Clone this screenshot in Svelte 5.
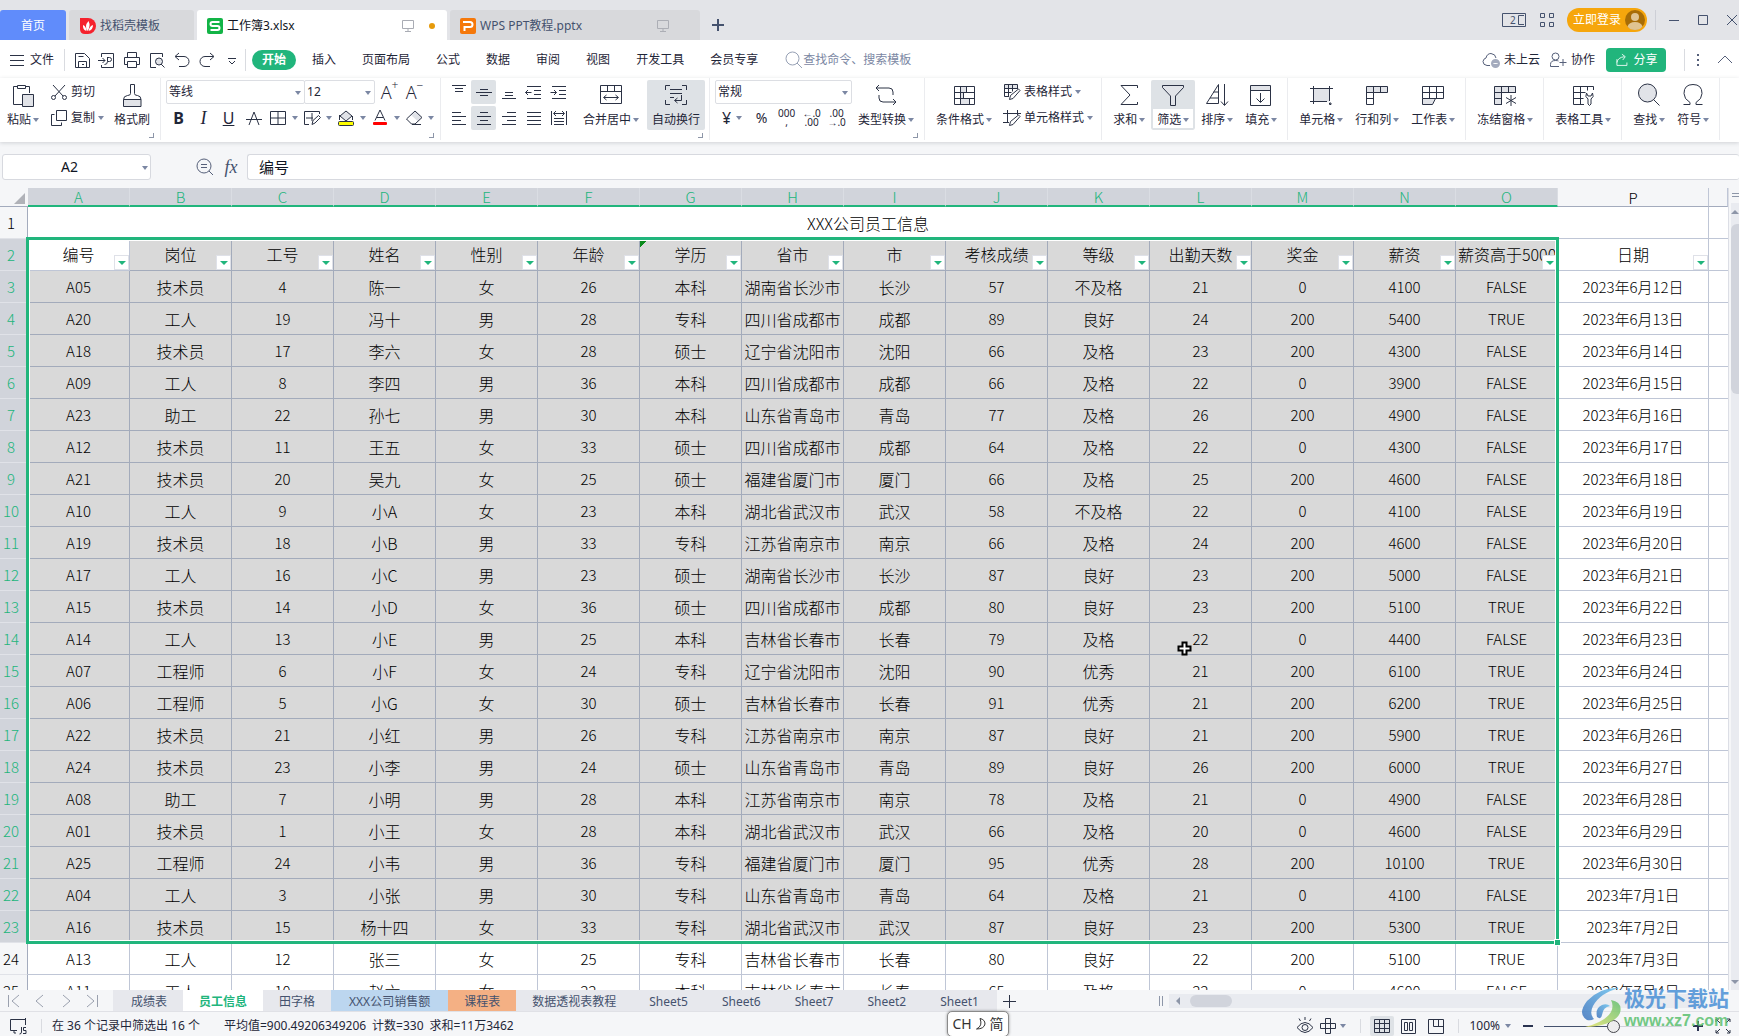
<script lang="ts">
	type Icon = { d: string; shade?: string };

	// 24px grid, used by the tall ribbon buttons
	const large: Record<string, Icon> = {
		paste: { d: 'M6.500 3.500H2.500V21.500H11M18.500 10V3.500H14.500M6.500 2.500h8v3h-8zM11.500 11.500h11v12h-11z', shade: 'M11.500 11.500h11v12h-11z' },
		brush: { d: 'M10.500 1.500h4v9q0 2 3 2 3.500.5 3.500 4H3.500q0-3.500 4-4 3 0 3-2zM3.500 16.500v7h17.500v-7', shade: 'M3.500 16.500h17.500v7H3.500z' },
		merge: { d: 'M1.500 2.500h21v18h-21zM1.500 8.500h21M8.500 2.500v6M15.500 2.500v6M5 14.500h14M7.500 12l-3 2.500 3 2.500M16.500 12l3 2.500-3 2.500' },
		wrap: { d: 'M1.500 7V2.500H6M18 2.500h4.500V7M1.500 17v4.500H6M18 21.500h4.500V17M6 6.500h12M6 10.500h12M6 14.500h4M17.500 12v5.500H11M13.500 15l-3 2.500 3 2.500' },
		convert: { d: 'M5 2L2 5l3 3M2.500 5H15q4 0 4 4v3M19 22l3-3-3-3M21.500 19H9q-4 0-4-4v-3' },
		conditional: { d: 'M2.500 3.500h20v18h-20zM2.500 9.500h20M2.500 15.500h20M8.500 3.500v18M14.500 3.500v6M11.500 9.500v6M17.500 15.500v6', shade: 'M8.500 3.500h6v6h-6zM8.500 9.500h3v6h-3zM8.500 15.500h9v6h-9z' },
		sum: { d: 'M20.500 5V2.500H4l9 9.500-9 9.500h16.500V19' },
		filter: { d: 'M14.500 13v9.500h-5V13L1.500 4.500v-2h21v2z', shade: 'M1.500 2.500h21v2l-8 8.500v9.500h-5V13L1.500 4.500z' },
		sort: { d: 'M1.500 20.500h12V1.500zM5 15h8.500M8.500 9h5M19.500 1v21M16 18.500l3.500 4 3.500-4' },
		fill: { d: 'M1.500 2.500h20v20h-20zM1.500 7.500h20M11.500 10v9M7.500 15.500l4 4 4-4', shade: 'M1.500 2.500h20v5h-20z' },
		cell: { d: 'M4.500 3v18M20.500 3v15M1 5.500h23M1 18.500h17M20.500 20v1.500h1.500V20z', shade: 'M4.500 5.500h16v13h-16z' },
		rowcol: { d: 'M1.500 3.500h21v6h-14v12h-7zM1.500 9.500h7M8.500 3.500v6M15.500 3.500v6M1.500 15.500h7', shade: 'M1.500 3.500h21v6h-21z' },
		sheet: { d: 'M1.500 3.500h21v12h-21zM1.500 9.500h21M8.500 3.500v12M15.500 3.500v12M1.500 15.500v6h10l3-6', shade: 'M1.500 15.500h13l-3 6h-10z' },
		freeze: { d: 'M22.500 10V3.500h-21v18H9M1.500 9.500h21M1.500 15.500h7M8.500 3.500v18M15.500 3.500v6M18 12v11M13 14.500l10 6M13 20.500l10-6', shade: 'M1.500 3.500h21v6h-14v12h-7z' },
		wrench: { d: 'M22.500 7V3.500h-20v18H13M2.500 9.500h12M2.500 15.500h10M9.500 3.500v18M16.500 3.500v4M15.500 10q-2 4 1.500 6v5q1.500 3 3 0v-5q3.500-2 1.500-6l-1.500 3h-3z' },
		find: { d: 'M16.500 16.500l6 6M19.500 10a9 9 0 1 1-18 0 9 9 0 1 1 18 0z', shade: 'M19.500 10a9 9 0 1 1-18 0 9 9 0 1 1 18 0z' },
		symbol: { d: 'M2.500 21.500h6.500v-2Q3 16 3 10.500 3 1.500 12 1.500t9 9q0 5.500-6 9v2h6.500' }
	};

	// 18px grid, used by toolbars and the status bar
	const small: Record<string, Icon> = {
		menu: { d: 'M2 4.500h14M2 9.500h14M2 14.500h14' },
		save: { d: 'M2.500 2.500h9l5 5v9h-14zM5.500 16.500v-6h8v6M5.500 5.500h5M9 13.500h2' },
		pdf: { d: 'M3.500 6V2.500h12v14h-12V14M0 9.500h7M4.500 7l2.500 2.500L4.500 12M9.500 6.500h2q2 0 2 2t-2 2h-2M9.500 6v4.500q0 3-3 3' },
		print: { d: 'M4.500 6.500v-5h9v5M4.500 13.500h-3v-7h15v7h-3M4.500 10.500h9v6h-9z' },
		preview: { d: 'M8 16.500H2.500v-14h12V6M13 13l3.500 3.500M14.500 10.500a3.500 3.500 0 1 1-7 0 3.500 3.500 0 1 1 7 0z', shade: 'M14.500 10.500a3.500 3.500 0 1 1-7 0 3.500 3.500 0 1 1 7 0z' },
		undo: { d: 'M6 2L2 5.500 6 9M2.500 5.500H11a5 5 0 0 1 0 10H6' },
		redo: { d: 'M12 2l4 3.500L12 9M15.500 5.500H7a5 5 0 0 0 0 10h5' },
		more: { d: 'M5 7.500h8M6 10l3 3 3-3' },
		cut: { d: 'M3 2l10 11M15 2L5 13M5.500 14.500a2 2 0 1 1-4 0 2 2 0 1 1 4 0zM16.500 14.500a2 2 0 1 1-4 0 2 2 0 1 1 4 0z' },
		copy: { d: 'M6.500 1.500h10v10h-10zM4.500 5.500h-3v11h10v-3' },
		strike: { d: 'M4 16L9 3l5 13M1 10.500h16' },
		borders: { d: 'M1.500 2.500h15v13h-15zM9 2.500v13M1.500 9h15' },
		draw: { d: 'M16.500 5V2.500h-15v13H6M9 4v8M3 9h7M9 15.500l1-4 5.500-5 2 2-5.500 5.500z' },
		eraser: { d: 'M7 15.500h9M6.500 15l-5-5 8.500-8 7 6.500-7 6.500z', shade: 'M6 6l4-4 7 6.500-4 4z' },
		top: { d: 'M2 2.500h14M5 5.500h8M5 8.500h8' },
		middle: { d: 'M5 6.500h8M1 9.500h16M5 12.500h8' },
		bottom: { d: 'M5 9.500h8M5 12.500h8M2 15.500h14' },
		outdent: { d: 'M2 3.500h14M9 7.500h7M9 11.500h7M2 15.500h14M0.500 9.500h6M3 7L0.500 9.500 3 12' },
		indent: { d: 'M2 3.500h14M9 7.500h7M9 11.500h7M2 15.500h14M0.500 9.500h6M4 7l2.500 2.500L4 12' },
		left: { d: 'M2 3.500h9M2 7.500h14M2 11.500h9M2 15.500h14' },
		center: { d: 'M5 3.500h8M2 7.500h14M5 11.500h8M2 15.500h14' },
		right: { d: 'M7 3.500h9M2 7.500h14M7 11.500h9M2 15.500h14' },
		justify: { d: 'M2 3.500h14M2 7.500h14M2 11.500h14M2 15.500h14' },
		distribute: { d: 'M1.500 2v14M16.500 2v14M4 4.500h10M6 2L3.500 4.500 6 7M12 2l2.500 2.500L12 7M4 9.500h10M4 12.500h10M4 15.500h10' },
		tablestyle: { d: 'M14.500 6V1.500h-13v12H6M1.500 5.500h13M1.500 9.500h7M5.500 1.500v12M9.500 1.500v7M6.500 16.500l1-4 8-6.500 1.500 1.500-7 8z', shade: 'M1.500 1.500h13v4h-13z' },
		cellstyle: { d: 'M4.500 1v13M0 4.500h18M14.500 1v5M0 13.500h6M6.500 16.500l1-4 8-6.500 1.500 1.500-7 8z' },
		search: { d: 'M12 12l5 5M14 7.500a6.500 6.500 0 1 1-13 0 6.500 6.500 0 1 1 13 0z' },
		zoomout: { d: 'M13 13l4 4M15 8a7 7 0 1 1-14 0 7 7 0 1 1 14 0zM5 6.500h6M5 9.500h6' },
		cloud: { d: 'M8 14.500H5q-4-.5-4-4 .5-3 3-3.500Q5 2.500 9 2.500q4.500.5 5 4.500' },
		person: { d: 'M10 5.500a3.500 3.500 0 1 1-7 0 3.500 3.500 0 1 1 7 0zM10 15.500H1.500v-2q0-4 5-4 2 0 3 .5M14 8v7M10.500 11.500h7' },
		share: { d: 'M3.500 8v7.500h12V12M3.500 12q1-6 9-7M9.500 2l4 3-3 4' },
		dots: { d: 'M8.500 3v2M9.500 3v2M8.500 8v2M9.500 8v2M8.500 13v2M9.500 13v2' },
		up: { d: 'M2 12l7-7 7 7' },
		first: { d: 'M3.500 3v12M14 3L7 9l7 6' },
		prev: { d: 'M12 3L5 9l7 6' },
		next: { d: 'M6 3l7 6-7 6' },
		last: { d: 'M14.500 3v12M4 3l7 6-7 6' },
		plus: { d: 'M9.500 3v13M3 9.500h13' },
		macro: { d: 'M8 13.500H1.500v-11h15V8M16.500 1v7M12.500 10v5q0 2-2 2M5 13v3h2M17 10.500h-2.500v3H17v3h-3' },
		eye: { d: 'M1 10.500q8-10 16 0-8 10-16 0zM12 10.500a3 3 0 1 1-6 0 3 3 0 1 1 6 0zM9 0v3M3 1.500l1.500 2.500M15 1.500L13.500 4' },
		cross: { d: 'M6.500 1.500h5v15h-5zM1.500 6.500h15v5h-15z' },
		grid: { d: 'M1.500 2.500h15v13h-15zM6.500 2.500v13M11.500 2.500v13M1.500 6.500h15M1.500 11.500h15' },
		page: { d: 'M1.500 2.500h14v14h-14zM4.500 5.500h3v8h-3zM9.500 5.500h3v8h-3z' },
		split: { d: 'M1.500 2.500h15v14h-15zM6.500 2.500v7h10M11.500 2.500v7' },
		full: { d: 'M6 6L2 2M2 5V2h3M12 6l4-4M13 2h3v3M6 12l-4 4M2 13v3h3M12 12l4 4M16 13v3h-3' },
		monitor: { d: 'M3.500 3.500h11v8h-11zM9 12v3M6 14.500h6' }
	};

	const menus = ['插入', '页面布局', '公式', '数据', '审阅', '视图', '开发工具', '会员专享'];
	const quick: [string, string][] = [
		['save', '保存'],
		['pdf', '输出为PDF'],
		['print', '打印'],
		['preview', '打印预览'],
		['undo', '撤销'],
		['redo', '恢复'],
		['more', '更多']
	];
	const alignTop: [string, string][] = [
		['top', '顶端对齐'],
		['middle', '垂直居中'],
		['bottom', '底端对齐'],
		['outdent', '减少缩进量'],
		['indent', '增加缩进量']
	];
	const alignBottom: [string, string][] = [
		['left', '左对齐'],
		['center', '水平居中'],
		['right', '右对齐'],
		['justify', '两端对齐'],
		['distribute', '分散对齐']
	];

	const columns = 'ABCDEFGHIJKLMNOP'.split('');
	const headers = '编号 岗位 工号 姓名 性别 年龄 学历 省市 市 考核成绩 等级 出勤天数 奖金 薪资 薪资高于5000 日期'.split(' ');

	const rows = `A05 技术员 4 陈一 女 26 本科 湖南省长沙市 长沙 57 不及格 21 0 4100 FALSE 2023年6月12日
A20 工人 19 冯十 男 28 专科 四川省成都市 成都 89 良好 24 200 5400 TRUE 2023年6月13日
A18 技术员 17 李六 女 28 硕士 辽宁省沈阳市 沈阳 66 及格 23 200 4300 FALSE 2023年6月14日
A09 工人 8 李四 男 36 本科 四川省成都市 成都 66 及格 22 0 3900 FALSE 2023年6月15日
A23 助工 22 孙七 男 30 本科 山东省青岛市 青岛 77 及格 26 200 4900 FALSE 2023年6月16日
A12 技术员 11 王五 女 33 硕士 四川省成都市 成都 64 及格 22 0 4300 FALSE 2023年6月17日
A21 技术员 20 吴九 女 25 硕士 福建省厦门市 厦门 66 及格 25 200 4600 FALSE 2023年6月18日
A10 工人 9 小A 女 23 本科 湖北省武汉市 武汉 58 不及格 22 0 4100 FALSE 2023年6月19日
A19 技术员 18 小B 男 33 专科 江苏省南京市 南京 66 及格 24 200 4600 FALSE 2023年6月20日
A17 工人 16 小C 男 23 硕士 湖南省长沙市 长沙 87 良好 23 200 5000 FALSE 2023年6月21日
A15 技术员 14 小D 女 36 硕士 四川省成都市 成都 80 良好 23 200 5100 TRUE 2023年6月22日
A14 工人 13 小E 男 25 本科 吉林省长春市 长春 79 及格 22 0 4400 FALSE 2023年6月23日
A07 工程师 6 小F 女 24 专科 辽宁省沈阳市 沈阳 90 优秀 21 200 6100 TRUE 2023年6月24日
A06 工程师 5 小G 女 30 硕士 吉林省长春市 长春 91 优秀 21 200 6200 TRUE 2023年6月25日
A22 技术员 21 小红 男 26 专科 江苏省南京市 南京 87 良好 21 200 5900 TRUE 2023年6月26日
A24 技术员 23 小李 男 24 硕士 山东省青岛市 青岛 89 良好 26 200 6000 TRUE 2023年6月27日
A08 助工 7 小明 男 28 本科 江苏省南京市 南京 78 及格 21 0 4900 FALSE 2023年6月28日
A01 技术员 1 小王 女 28 本科 湖北省武汉市 武汉 66 及格 20 0 4600 FALSE 2023年6月29日
A25 工程师 24 小韦 男 36 专科 福建省厦门市 厦门 95 优秀 28 200 10100 TRUE 2023年6月30日
A04 工人 3 小张 男 30 专科 山东省青岛市 青岛 64 及格 21 0 4100 FALSE 2023年7月1日
A16 技术员 15 杨十四 女 33 专科 湖北省武汉市 武汉 87 良好 23 200 5300 TRUE 2023年7月2日
A13 工人 12 张三 女 25 专科 吉林省长春市 长春 80 良好 22 200 5100 TRUE 2023年7月3日
A11 工人 10 赵六 女 22 本科 吉林省长春市 长春 65 及格 22 0 4600 FALSE 2023年7月4日`
		.split('\n')
		.map((line) => line.split(' '));

	const sheets = ['成绩表', '员工信息', '田字格', 'XXX公司销售额', '课程表', '数据透视表教程', 'Sheet5', 'Sheet6', 'Sheet7', 'Sheet2', 'Sheet1'];

	let activeSheet = $state('员工信息');
	let zoom = $state(100);

	const inSelection = (row: number, col: number) => row >= 2 && row <= 23 && col < 15;
	const isLatin = (text: string) => /^[A-Z0-9]/.test(text);
</script>

{#snippet icon(name: string)}
	<svg class="icon" width="18" height="18" viewBox="0 0 18 18" aria-hidden="true">
		{#if small[name].shade}<path class="shade" d={small[name].shade} />{/if}
		<path d={small[name].d} />
	</svg>
{/snippet}

{#snippet tool(name: string, title: string, on = false)}
	<button class="tool" class:on aria-label={title}>{@render icon(name)}</button>
{/snippet}

{#snippet split(name: string, title: string)}
	<button class="tool split" aria-label={title}>{@render icon(name)}<i class="caret"></i></button>
{/snippet}

{#snippet big(name: string, label: string, caret = true)}
	<button class="big {name}">
		<svg class="icon" width="24" height="24" viewBox="0 0 24 24" aria-hidden="true">
			{#if large[name].shade}<path class="shade" d={large[name].shade} />{/if}
			<path d={large[name].d} />
		</svg>
		<span class="label">{label}{#if caret}<i class="caret"></i>{/if}</span>
	</button>
{/snippet}

{#snippet line(name: string, label: string, caret = true)}
	<button class="line">{@render icon(name)}<span>{label}</span>{#if caret}<i class="caret"></i>{/if}</button>
{/snippet}

<div class="app">
	<header class="titlebar">
		<button class="tab home">首页</button>
		<button class="tab docer">
			<svg width="16" height="16" viewBox="0 0 16 16" aria-hidden="true">
				<path fill="#f5222d" d="M0 0h8a8 8 0 0 1 0 16H5Q0 16 0 11z" />
				<path fill="#fff" d="M7.500 13Q4 8 8.500 3q2.500 5-1 10zM6.500 13Q2.500 12 3 7q3 1 3.500 6zM8.500 13q4.500-1 4.500-6-3.500 1-4.500 6z" />
			</svg>
			<span>找稻壳模板</span>
		</button>
		<button class="tab doc current">
			<svg width="16" height="16" viewBox="0 0 16 16" aria-hidden="true">
				<rect width="16" height="16" rx="2" fill="#12b446" />
				<path fill="none" stroke="#fff" stroke-width="2" d="M12.500 4h-7q-2 0-2 2t2 2h5q2 0 2 2t-2 2h-7" />
			</svg>
			<span class="name">工作簿3.xlsx</span>
			<span class="screen">{@render icon('monitor')}</span>
			<i class="unsaved"></i>
		</button>
		<button class="tab doc">
			<svg width="16" height="16" viewBox="0 0 16 16" aria-hidden="true">
				<rect width="16" height="16" rx="2" fill="#f5780a" />
				<path fill="none" stroke="#fff" stroke-width="2" d="M3 4h7q2.500 0 2.500 2.500T10 9H4.500v4" />
			</svg>
			<span class="name">WPS PPT教程.pptx</span>
			<span class="screen">{@render icon('monitor')}</span>
		</button>
		<button class="newtab" aria-label="新建">
			<svg width="14" height="14" viewBox="0 0 14 14" aria-hidden="true"><path stroke="#45526e" stroke-width="2" d="M7 1v12M1 7h12" /></svg>
		</button>
		<div class="window">
			<button aria-label="窗口">
				<svg class="icon" width="26" height="16" viewBox="0 0 26 16"><path d="M1.500 1.500h23v13h-23zM23 3.500h-5.500v9H23" /><text x="9" y="12">2</text></svg>
			</button>
			<button aria-label="应用">
				<svg class="icon" width="16" height="16" viewBox="0 0 16 16"><path d="M1.500 1.500h4v4h-4zM10.500 1.500h4v4h-4zM1.500 10.500h4v4h-4zM10.500 10.500h4v4h-4z" /></svg>
			</button>
			<button class="login">
				立即登录
				<svg width="20" height="20" viewBox="0 0 20 20" aria-hidden="true">
					<circle cx="10" cy="10" r="10" fill="#a86d06" />
					<circle cx="10" cy="7" r="4" fill="#e0c491" />
					<path fill="#e0c491" d="M2.500 16.500Q4 12 10 12t7.500 4.500Q15 20 10 20t-7.500-3.500z" />
				</svg>
			</button>
			<i class="rule"></i>
			<div class="controls">
				<button aria-label="最小化"><svg class="icon" width="12" height="12" viewBox="0 0 12 12"><path d="M1 6.500h10" /></svg></button>
				<button aria-label="最大化"><svg class="icon" width="12" height="12" viewBox="0 0 12 12"><path d="M1.500 1.500h9v9h-9z" /></svg></button>
				<button aria-label="关闭"><svg class="icon" width="12" height="12" viewBox="0 0 12 12"><path d="M1 1l10 10M11 1L1 11" /></svg></button>
			</div>
		</div>
	</header>

	<nav class="menubar">
		<button class="file">{@render icon('menu')}文件</button>
		<i class="rule"></i>
		<div class="quick">
			{#each quick as [name, title]}
				{@render tool(name, title)}
			{/each}
		</div>
		<i class="rule"></i>
		<div class="menus">
			<button class="start">开始</button>
			{#each menus as menu}
				<button>{menu}</button>
			{/each}
		</div>
		<label class="search">{@render icon('search')}<input placeholder="查找命令、搜索模板" aria-label="查找命令" /></label>
		<button class="account">
			<span class="cloud">{@render icon('cloud')}<i></i></span>未上云
		</button>
		<button class="account">{@render icon('person')}协作</button>
		<button class="share">{@render icon('share')}分享</button>
		<i class="rule"></i>
		<button class="end" aria-label="更多">{@render icon('dots')}</button>
		<button class="end" aria-label="收起">{@render icon('up')}</button>
	</nav>

	<section class="ribbon">
		<div class="group first">
			{@render big('paste', '粘贴')}
			<div class="stack">
				{@render line('cut', '剪切', false)}
				{@render line('copy', '复制')}
			</div>
			{@render big('brush', '格式刷', false)}
			<i class="launcher"></i>
		</div>
		<div class="group">
			<div class="stack">
				<div class="bar">
					<span class="combo font"><select aria-label="字体"><option>等线</option></select><i class="caret"></i></span>
					<span class="combo size"><select aria-label="字号"><option>12</option></select><i class="caret"></i></span>
					<button class="tool grow">A<sup>+</sup></button>
					<button class="tool grow">A<sup>−</sup></button>
				</div>
				<div class="bar">
					<button class="tool glyph"><b>B</b></button>
					<button class="tool glyph"><em>I</em></button>
					<button class="tool glyph"><u>U</u></button>
					{@render tool('strike', '删除线')}
					{@render split('borders', '边框')}
					{@render split('draw', '绘图边框')}
					<button class="tool split" aria-label="填充颜色">
						<svg class="icon" width="18" height="18" viewBox="0 0 18 18">
							<path class="shade" d="M3 7l6-5 6 5-6 5z" />
							<path d="M3 7l6-5 6 5-6 5zM2.500 6v5M15.500 7v4" />
							<rect x="1.500" y="12.500" width="15" height="4" rx="1" fill="#ff0" />
						</svg>
						<i class="caret"></i>
					</button>
					<button class="tool split" aria-label="字体颜色">
						<svg class="icon" width="18" height="18" viewBox="0 0 18 18">
							<path d="M4 11.500L9 1l5 10.500M6 8.500h6" />
							<rect class="red" x="2" y="13" width="14" height="3" rx="1" />
						</svg>
						<i class="caret"></i>
					</button>
					{@render split('eraser', '清除')}
				</div>
			</div>
			<i class="launcher"></i>
		</div>
		<div class="group">
			<div class="stack">
				<div class="bar">
					{#each alignTop as [name, title]}{@render tool(name, title, name === 'middle')}{/each}
				</div>
				<div class="bar">
					{#each alignBottom as [name, title]}{@render tool(name, title, name === 'center')}{/each}
				</div>
			</div>
			<div class="pair">
				{@render big('merge', '合并居中')}
				{@render big('wrap', '自动换行', false)}
			</div>
			<i class="launcher"></i>
		</div>
		<div class="group">
			<div class="stack">
				<span class="combo format"><select aria-label="数字格式"><option>常规</option></select><i class="caret"></i></span>
				<div class="bar">
					<button class="tool split glyph"><span>¥</span><i class="caret"></i></button>
					<button class="tool glyph percent">%</button>
					<button class="tool digits">000<br />,</button>
					<button class="tool digits">←.0<br />.00</button>
					<button class="tool digits">.00<br />→.0</button>
				</div>
			</div>
			{@render big('convert', '类型转换')}
			<i class="launcher"></i>
		</div>
		<div class="group">
			{@render big('conditional', '条件格式')}
			<div class="stack">
				{@render line('tablestyle', '表格样式')}
				{@render line('cellstyle', '单元格样式')}
			</div>
		</div>
		<div class="group">
			{@render big('sum', '求和')}
			{@render big('filter', '筛选')}
			{@render big('sort', '排序')}
			{@render big('fill', '填充')}
		</div>
		<div class="group">
			{@render big('cell', '单元格')}
			{@render big('rowcol', '行和列')}
			{@render big('sheet', '工作表')}
		</div>
		<div class="group">{@render big('freeze', '冻结窗格')}</div>
		<div class="group">{@render big('wrench', '表格工具')}</div>
		<div class="group">
			{@render big('find', '查找')}
			{@render big('symbol', '符号')}
		</div>
	</section>

	<section class="formula">
		<span class="namebox"><input value="A2" aria-label="名称框" /><i class="caret"></i></span>
		<button class="tool zoomer" aria-label="浏览">{@render icon('zoomout')}</button>
		<button class="fx">fx</button>
		<input class="content" value="编号" aria-label="编辑栏" />
	</section>

	<main class="workspace">
		<div class="grid">
			<table>
				<colgroup>
					<col class="rowhead" />
					{#each columns as column}<col class:date={column === 'P'} />{/each}
					<col class="rest" />
				</colgroup>
				<thead>
					<tr>
						<th class="corner"><svg width="11" height="11" viewBox="0 0 11 11" aria-hidden="true"><path fill="#b0b2b8" d="M11 0v11H0z" /></svg></th>
						{#each columns as column}<th class:picked={column !== 'P'}>{column}</th>{/each}
						<th></th>
					</tr>
				</thead>
				<tbody>
					<tr>
						<th>1</th>
						<td class="title" colspan="16">XXX公司员工信息</td>
						<td></td>
					</tr>
					<tr>
						<th class="picked">2</th>
						{#each headers as header, col}
							<td class:selected={inSelection(2, col) && col > 0} class:flagged={col === 6}>
								<div class="head">{header}<button class="filterbtn" aria-label="筛选{header}"><i></i></button></div>
							</td>
						{/each}
						<td></td>
					</tr>
					{#each rows as cells, index}
						<tr>
							<th class:picked={index + 3 <= 23}>{index + 3}</th>
							{#each cells as cell, col}
								<td class:selected={inSelection(index + 3, col)} class:latin={isLatin(cell)}>{cell}</td>
							{/each}
							<td></td>
						</tr>
					{/each}
				</tbody>
			</table>
			<div class="selection"><i></i></div>
			<svg class="pointer" width="18" height="18" viewBox="0 0 18 18" aria-hidden="true">
				<path d="M6.500 2.500h4v4h4v4h-4v4h-4v-4h-4v-4h4z" />
			</svg>
		</div>
		<div class="vscroll">
			<span class="handle"></span>
			<div class="track"><i class="tri up"></i><span class="thumb"></span><i class="tri down"></i></div>
		</div>
	</main>

	<footer class="sheetbar">
		<div class="nav">
			{#each ['first', 'prev', 'next', 'last'] as name}
				<button aria-label={name}>{@render icon(name)}</button>
			{/each}
		</div>
		<div class="sheets">
			{#each sheets as sheet}
				<button
					class:active={sheet === activeSheet}
					class:blue={sheet === 'XXX公司销售额'}
					class:orange={sheet === '课程表'}
					onclick={() => (activeSheet = sheet)}>{sheet}</button
				>
			{/each}
		</div>
		<button class="add" aria-label="新建工作表">{@render icon('plus')}</button>
		<div class="hscroll"><i class="bars"></i><div class="track"><i class="tri"></i><span class="thumb"></span></div></div>
	</footer>

	<footer class="status">
		{@render icon('macro')}
		<i class="rule"></i>
		<span>在 36 个记录中筛选出 16 个</span>
		<span class="stats">平均值=900.49206349206&ensp;计数=330&ensp;求和=11万3462</span>
		<div class="views">
			<button aria-label="护眼模式">{@render icon('eye')}</button>
			<button class="reading" aria-label="阅读模式">{@render icon('cross')}<i class="caret"></i></button>
			<i class="rule"></i>
			<button class="view on" aria-label="普通视图">{@render icon('grid')}</button>
			<button class="view" aria-label="分页预览">{@render icon('page')}</button>
			<button class="view" aria-label="自定义视图">{@render icon('split')}</button>
			<i class="rule"></i>
			<button class="percentage">{zoom}%<i class="caret"></i></button>
			<button class="step" aria-label="缩小"><svg width="12" height="12" viewBox="0 0 12 12"><path stroke="#2a3350" stroke-width="2" d="M1 6h10" /></svg></button>
			<input type="range" min="0" max="200" bind:value={zoom} aria-label="缩放" />
			<button class="step" aria-label="放大"><svg width="12" height="12" viewBox="0 0 12 12"><path stroke="#2a3350" stroke-width="2" d="M1 6h10M6 1v10" /></svg></button>
			<button aria-label="全屏">{@render icon('full')}</button>
		</div>
	</footer>

	<div class="ime">CH<svg width="12" height="14" viewBox="0 0 12 14" aria-hidden="true"><path fill="none" stroke="#333" d="M5 1.500q5 1 5 5.500-1 5-8.500 5Q8 9 5 1.500z" /></svg>简</div>

	<div class="watermark">
		<svg width="46" height="44" viewBox="0 0 46 44" aria-hidden="true">
			<defs>
				<linearGradient id="lime" x1="0" y1="1" x2="1" y2="0"><stop offset="0" stop-color="#e8e46a" /><stop offset="1" stop-color="#5fbf70" /></linearGradient>
				<linearGradient id="sky" x1="0" y1="1" x2="1" y2="0"><stop offset="0" stop-color="#3d73bd" /><stop offset="1" stop-color="#6cc4f0" /></linearGradient>
			</defs>
			<path fill="url(#sky)" d="M41 2Q22 1 9 15-1 28 9 34q4 1 7-1-5-5-1-13Q22 7 41 2z" />
			<path fill="url(#sky)" d="M19 31q-2-9 5-12 5-2 8 1-7 1-8 9-1 5-5 2z" />
			<path fill="url(#lime)" d="M33 14q12 2 9 13Q36 40 7 41q20-5 26-15 3-6 0-12z" />
		</svg>
		<div>
			<strong>极光下载站</strong>
			<span>www.xz7.com</span>
		</div>
	</div>
</div>

<style>
	:global(body) {
		margin: 0;
		overflow: hidden;
	}

	.app {
		position: relative;
		display: flex;
		flex-direction: column;
		height: 100vh;
		overflow: hidden;
		background: #f5f6f8;
		color: #1f2638;
		font: 12px/16px 'Noto Sans', 'Noto Sans CJK SC', sans-serif;
	}

	button,
	input,
	select {
		box-sizing: border-box;
		margin: 0;
		padding: 0;
		border: 0;
		background: none;
		color: inherit;
		font: inherit;
		outline: none;
		white-space: nowrap;
	}

	button {
		display: flex;
		flex: none;
		align-items: center;
		justify-content: center;
	}

	select {
		appearance: none;
		width: 100%;
		height: 100%;
		padding-left: 2px;
	}

	svg {
		display: block;
		flex: none;
	}

	.icon {
		fill: none;
		stroke: #2b3245;
	}

	.icon .shade {
		fill: #e1e3e8;
		stroke: none;
	}

	.icon .red {
		fill: #f00;
		stroke: none;
	}

	.icon text {
		fill: #45526e;
		stroke: none;
		font-size: 10px;
	}

	.caret {
		flex: none;
		width: 0;
		height: 0;
		border: 3px solid transparent;
		border-top: 4px solid #7b87a3;
		border-bottom: 0;
	}

	.rule {
		flex: none;
		width: 1px;
		height: 24px;
		background: #d9dbe0;
	}

	/* title bar */
	.titlebar {
		display: flex;
		align-items: flex-end;
		gap: 3px;
		height: 40px;
		background: #e3e4e8;
		color: #45526e;
	}

	.tab {
		height: 30px;
		gap: 4px;
		padding-top: 2px;
		border-radius: 3px 3px 0 0;
		background: #d8d9dc;
	}

	.home {
		width: 66px;
		background: #608cfb;
		color: #fff;
	}

	.docer {
		width: 125px;
		padding-left: 11px;
		justify-content: flex-start;
	}

	.doc {
		width: 250px;
		padding: 2px 12px 0 10px;
	}

	.doc .name {
		flex: 1;
		text-align: left;
	}

	.current {
		background: #fff;
		color: #101523;
	}

	.screen {
		margin-right: 16px;
		opacity: 0.25;
	}

	.current .screen {
		margin-right: 8px;
		opacity: 0.4;
	}

	.unsaved {
		width: 6px;
		height: 6px;
		border-radius: 50%;
		background: #e69a0b;
	}

	.newtab {
		width: 30px;
		height: 30px;
	}

	.window {
		display: flex;
		align-items: center;
		align-self: stretch;
		gap: 12px;
		margin-left: auto;
	}

	.window .icon {
		stroke: #45526e;
	}

	.window .rule {
		height: 20px;
		margin-left: -4px;
		background: #cdcfd6;
	}

	.controls {
		display: flex;
		gap: 17px;
		padding-right: 1px;
	}

	.window .login {
		gap: 4px;
		height: 24px;
		padding: 0 2px 0 6px;
		border-radius: 12px;
		background: #f6a60c;
		color: #fff;
	}

	/* menu bar */
	.menubar {
		display: flex;
		align-items: center;
		height: 38px;
		padding-top: 1px;
		box-sizing: border-box;
		background: #fff;
	}

	.file {
		gap: 4px;
		padding: 0 10px 0 8px;
	}

	.quick {
		display: flex;
		padding: 0 1px 0 4px;
	}

	.menus {
		display: flex;
		gap: 6px;
		margin-left: 6px;
	}

	.menus button {
		height: 20px;
		padding: 0 10px;
	}

	.menus .start {
		border-radius: 10px;
		background: #21b57c;
		color: #fff;
		font-weight: 700;
	}

	.search {
		display: flex;
		align-items: center;
		flex: 1;
		margin-left: 17px;
		color: #7b87a3;
	}

	.search .icon {
		stroke: #97a1b5;
	}

	.search input::placeholder {
		color: #7b87a3;
	}

	.account {
		gap: 4px;
		margin-right: 9px;
	}

	.account .icon {
		stroke: #56607a;
	}

	.cloud {
		position: relative;
	}

	.cloud i {
		position: absolute;
		right: 0;
		bottom: 1px;
		width: 5px;
		height: 1px;
		border: solid #a4abbd;
		border-width: 4px 2px;
		border-radius: 5px;
		background: #fff;
	}

	.share {
		gap: 4px;
		width: 60px;
		height: 24px;
		margin: 0 18px 0 2px;
		border-radius: 4px;
		background: #21b57c;
		color: #fff;
	}

	.share .icon {
		width: 15px;
		stroke: #fff;
	}

	.menubar .rule {
		height: 22px;
	}

	.end {
		padding: 0 5px 0 4px;
	}

	.end .icon {
		stroke: #56607a;
	}

	/* ribbon */
	.ribbon {
		z-index: 1;
		display: flex;
		height: 64px;
		background: #fff;
		box-shadow: 0 1px 4px rgba(60, 65, 80, 0.2);
	}

	.group {
		position: relative;
		display: flex;
		align-items: flex-start;
		height: 60px;
		padding: 2px 4px 0 5px;
		border-right: 1px solid #ebecef;
	}

	.first {
		padding-left: 1px;
	}

	.stack {
		display: flex;
		flex-direction: column;
		gap: 2px;
	}

	.bar {
		display: flex;
		height: 24px;
	}

	.pair {
		display: flex;
		gap: 2px;
		margin-left: 6px;
	}

	.tool {
		width: 25px;
		height: 24px;
	}

	.on {
		border-radius: 2px;
		background: #dee2e6;
	}

	.split {
		gap: 5px;
		width: 34px;
	}

	.big {
		flex-direction: column;
		justify-content: flex-start;
		gap: 5px;
		height: 50px;
		padding: 3px 6px 0;
	}

	.big.wrap,
	.big.filter {
		border-radius: 2px;
		background: #dee2e6;
	}

	.big.wrap {
		padding: 3px 5px 0;
	}

	.big.filter {
		background: linear-gradient(#dee2e6, #dee2e6) top / 100% 29px no-repeat, #fff;
		box-shadow: inset 0 0 0 2px #dee2e6;
	}

	.label {
		display: flex;
		align-items: center;
		gap: 2px;
	}

	.line {
		justify-content: flex-start;
		gap: 3px;
		height: 24px;
		padding: 0 4px 0 5px;
	}

	.combo {
		position: relative;
		box-sizing: border-box;
		height: 24px;
		border: 1px solid #dcdee3;
		border-radius: 2px;
	}

	.combo .caret,
	.namebox .caret {
		position: absolute;
		top: 10px;
		right: 3px;
	}

	.combo.font {
		width: 139px;
	}

	.combo.size {
		width: 71px;
		margin: 0 2px 0 -1px;
	}

	.combo.format {
		width: 137px;
	}

	.grow {
		font-size: 18px;
		font-weight: 300;
	}

	.grow sup {
		align-self: flex-start;
		font-size: 12px;
		line-height: 12px;
	}

	.glyph {
		font-size: 16px;
	}

	.glyph em {
		font-family: 'Liberation Serif', serif;
		font-size: 18px;
	}

	.percent {
		font-size: 14px;
	}

	.digits {
		display: block;
		font: 10px/9px 'Noto Sans', sans-serif;
		text-align: center;
	}

	.launcher {
		position: absolute;
		right: 6px;
		bottom: 2px;
		width: 4px;
		height: 4px;
		border: solid #8d96a8;
		border-width: 0 1px 1px 0;
	}

	/* formula bar */
	.formula {
		display: flex;
		align-items: center;
		height: 46px;
		padding: 3px 0 0 2px;
		box-sizing: border-box;
		font-size: 14px;
	}

	.namebox {
		position: relative;
		width: 149px;
		margin-right: 41px;
	}

	.namebox input,
	.content {
		width: 100%;
		height: 26px;
		border: 1px solid #d7d9df;
		border-radius: 3px;
		background: #fff;
		color: #101523;
	}

	.namebox input {
		padding-right: 14px;
		text-align: center;
	}

	.namebox .caret {
		top: 12px;
	}

	.zoomer .icon {
		stroke: #56607a;
	}

	.fx {
		width: 28px;
		margin-right: 2px;
		color: #45526e;
		font: italic 18px/20px 'Liberation Serif', serif;
	}

	.content {
		flex: 1;
		padding-left: 11px;
		border-right: 0;
		font-size: 15px;
	}

	/* sheet */
	.workspace {
		display: flex;
		flex: 1;
		min-height: 0;
	}

	.grid {
		position: relative;
		flex: 1;
		min-width: 0;
		overflow: hidden;
		background: #fff;
	}

	table {
		width: 100%;
		border-spacing: 0;
		table-layout: fixed;
		color: #000;
		font: 16px/24px 'Noto Sans CJK SC', sans-serif;
	}

	col {
		width: 102px;
	}

	col.rowhead {
		width: 28px;
	}

	col.date {
		width: 151px;
	}

	col.rest {
		width: auto;
	}

	th,
	td {
		box-sizing: border-box;
		height: 32px;
		padding: 0;
		border: solid #bfc6d6;
		border-width: 0 1px 1px 0;
		overflow: hidden;
		font-weight: 300;
		text-align: center;
		white-space: nowrap;
	}

	th {
		background: #f5f6f8;
	}

	tbody th {
		padding-right: 5px;
		border-color: #e0e2e8;
		border-right-color: #a3abbd;
		font-size: 15px;
	}

	thead th {
		height: 19px;
		padding-top: 1px;
		border-bottom-color: #a3abbd;
		overflow: visible;
		font-size: 15px;
		line-height: 16px;
	}

	th.picked {
		background: #d1d4db;
		color: #21b57c;
	}

	thead th.picked {
		padding-top: 0;
		border-right-color: #dadde3;
		border-bottom: 2px solid #21b57c;
	}

	thead .corner {
		padding-top: 0;
		border-right: 0;
	}

	.corner svg {
		margin: 2px 0 0 14px;
	}

	td:last-child {
		border-right: 0;
	}

	.latin {
		font-size: 15px;
	}

	.selected {
		border-color: #a3abbb;
		background: #d9d9d9;
	}

	.head {
		position: relative;
		height: 31px;
		padding: 0 2px;
		line-height: 30px;
	}

	.flagged .head {
		background: linear-gradient(135deg, #0a8a1c 6px, transparent 6px);
	}

	.filterbtn {
		position: absolute;
		right: 0;
		bottom: 0;
		width: 15px;
		height: 15px;
		border: 1px solid #dfe1e8;
		background: #fff;
	}

	.filterbtn i {
		border: 4px solid transparent;
		border-top-color: #21b57c;
		border-bottom: 0;
	}

	.selection {
		position: absolute;
		top: 49px;
		left: 26px;
		box-sizing: border-box;
		width: 1533px;
		height: 707px;
		border: 3px solid #21b57c;
		box-shadow: inset 0 0 0 1px #fff;
		pointer-events: none;
	}

	.selection i {
		position: absolute;
		right: -5px;
		bottom: -5px;
		width: 5px;
		height: 5px;
		border: 1px solid #fff;
		background: #21b57c;
	}

	.pointer {
		position: absolute;
		top: 452px;
		left: 1176px;
		fill: #fff;
		stroke: #000;
		stroke-width: 2px;
	}

	.vscroll {
		display: flex;
		flex-direction: column;
		width: 10px;
		border-left: 1px solid #dcdee5;
	}

	.handle {
		width: 7px;
		height: 2px;
		margin: 5px 0 6px 3px;
		border: solid #8d96a8;
		border-width: 1px 0;
	}

	.vscroll .track {
		display: flex;
		flex: 1;
		flex-direction: column;
		align-items: center;
		margin-left: 2px;
		background: #e9ebf0;
	}

	.tri {
		border: 4px solid transparent;
	}

	.tri.up {
		margin: 7px 0 10px;
		border-top: 0;
		border-bottom-color: #8d96a8;
	}

	.tri.down {
		margin: auto 0 6px;
		border-bottom: 0;
		border-top-color: #8d96a8;
	}

	.vscroll .thumb {
		width: 100%;
		height: 170px;
		border-radius: 6px 0 0 6px;
		background: #d1d4dc;
	}

	/* sheet tabs */
	.sheetbar {
		display: flex;
		height: 22px;
		border-bottom: 1px solid #e0e1e6;
		box-sizing: border-box;
		color: #45526e;
	}

	.nav {
		display: flex;
		gap: 8px;
		width: 108px;
		padding: 1px 0 0 5px;
	}

	.nav .icon {
		stroke: #9aa0ae;
	}

	.sheets {
		display: flex;
		padding: 0 1px 0 2px;
		background: #e7e8ed;
	}

	.sheets button {
		padding: 2px 16px 0;
	}

	.sheets button:nth-child(n + 7) {
		padding: 2px 17px 0;
	}

	.sheets .active {
		background: #fff;
		color: #21b57c;
		font-weight: 700;
	}

	.sheets .blue {
		padding: 2px 18px 0;
		background: #bcd6ef;
	}

	.sheets .orange {
		background: #f4b084;
	}

	.add {
		width: 24px;
	}

	.hscroll {
		display: flex;
		flex: 1;
		align-items: center;
		gap: 6px;
		margin: 0 36px 0 138px;
	}

	.bars {
		width: 2px;
		height: 10px;
		border: solid #8d96a8;
		border-width: 0 1px;
	}

	.hscroll .track {
		display: flex;
		flex: 1;
		align-items: center;
		gap: 10px;
		height: 14px;
		padding-left: 3px;
		background: #e9ebf0;
	}

	.hscroll .tri {
		border-left: 0;
		border-right-color: #8d96a8;
		margin-left: 4px;
	}

	.hscroll .thumb {
		width: 42px;
		height: 12px;
		border-radius: 6px;
		background: #d1d4dc;
	}

	/* status bar */
	.status {
		display: flex;
		align-items: center;
		height: 24px;
		padding: 4px 7px 0 9px;
		box-sizing: border-box;
	}

	.status .rule {
		height: 14px;
		margin: 0 10px 0 14px;
	}

	.stats {
		margin-left: 24px;
	}

	.views {
		display: flex;
		align-items: center;
		align-self: stretch;
		margin-left: auto;
	}

	.status .views .rule {
		margin: 0 9px 0 14px;
	}

	.status .views .view + .rule {
		margin: 0 10px 0 7px;
	}

	.reading {
		gap: 3px;
		margin-left: 5px;
	}

	.view {
		align-self: stretch;
		width: 24px;
		margin-right: 3px;
	}

	.percentage {
		gap: 5px;
		margin-right: 10px;
	}

	.step {
		width: 14px;
	}

	.views input {
		appearance: none;
		width: 138px;
		height: 14px;
		margin: 0 9px;
		background: linear-gradient(90deg, #45526e 50%, #cfd2da 50%) center / 100% 1px no-repeat;
	}

	.views input::-webkit-slider-thumb {
		appearance: none;
		width: 13px;
		height: 13px;
		border: 1px solid #45464c;
		border-radius: 50%;
		background: #ededee;
	}

	.views button:last-child {
		margin-left: 9px;
	}

	/* floating pieces */
	.ime {
		position: absolute;
		left: 947px;
		bottom: -1px;
		display: flex;
		align-items: center;
		justify-content: center;
		gap: 3px;
		width: 60px;
		height: 24px;
		border: 1px solid #8a8a8a;
		border-radius: 5px;
		background: #fff;
		color: #333;
		font-size: 14px;
		box-shadow: 0 0 3px rgba(0, 0, 0, 0.4);
	}

	.watermark {
		position: absolute;
		right: 10px;
		bottom: 6px;
		display: flex;
		opacity: 0.85;
		pointer-events: none;
	}

	.watermark div {
		display: flex;
		flex-direction: column;
		gap: 3px;
	}

	.watermark strong {
		color: #4a90d6;
		font-size: 21px;
		line-height: 24px;
	}

	.watermark span {
		color: #5cc170;
		font: 700 16px/16px 'Liberation Sans', sans-serif;
	}
</style>
